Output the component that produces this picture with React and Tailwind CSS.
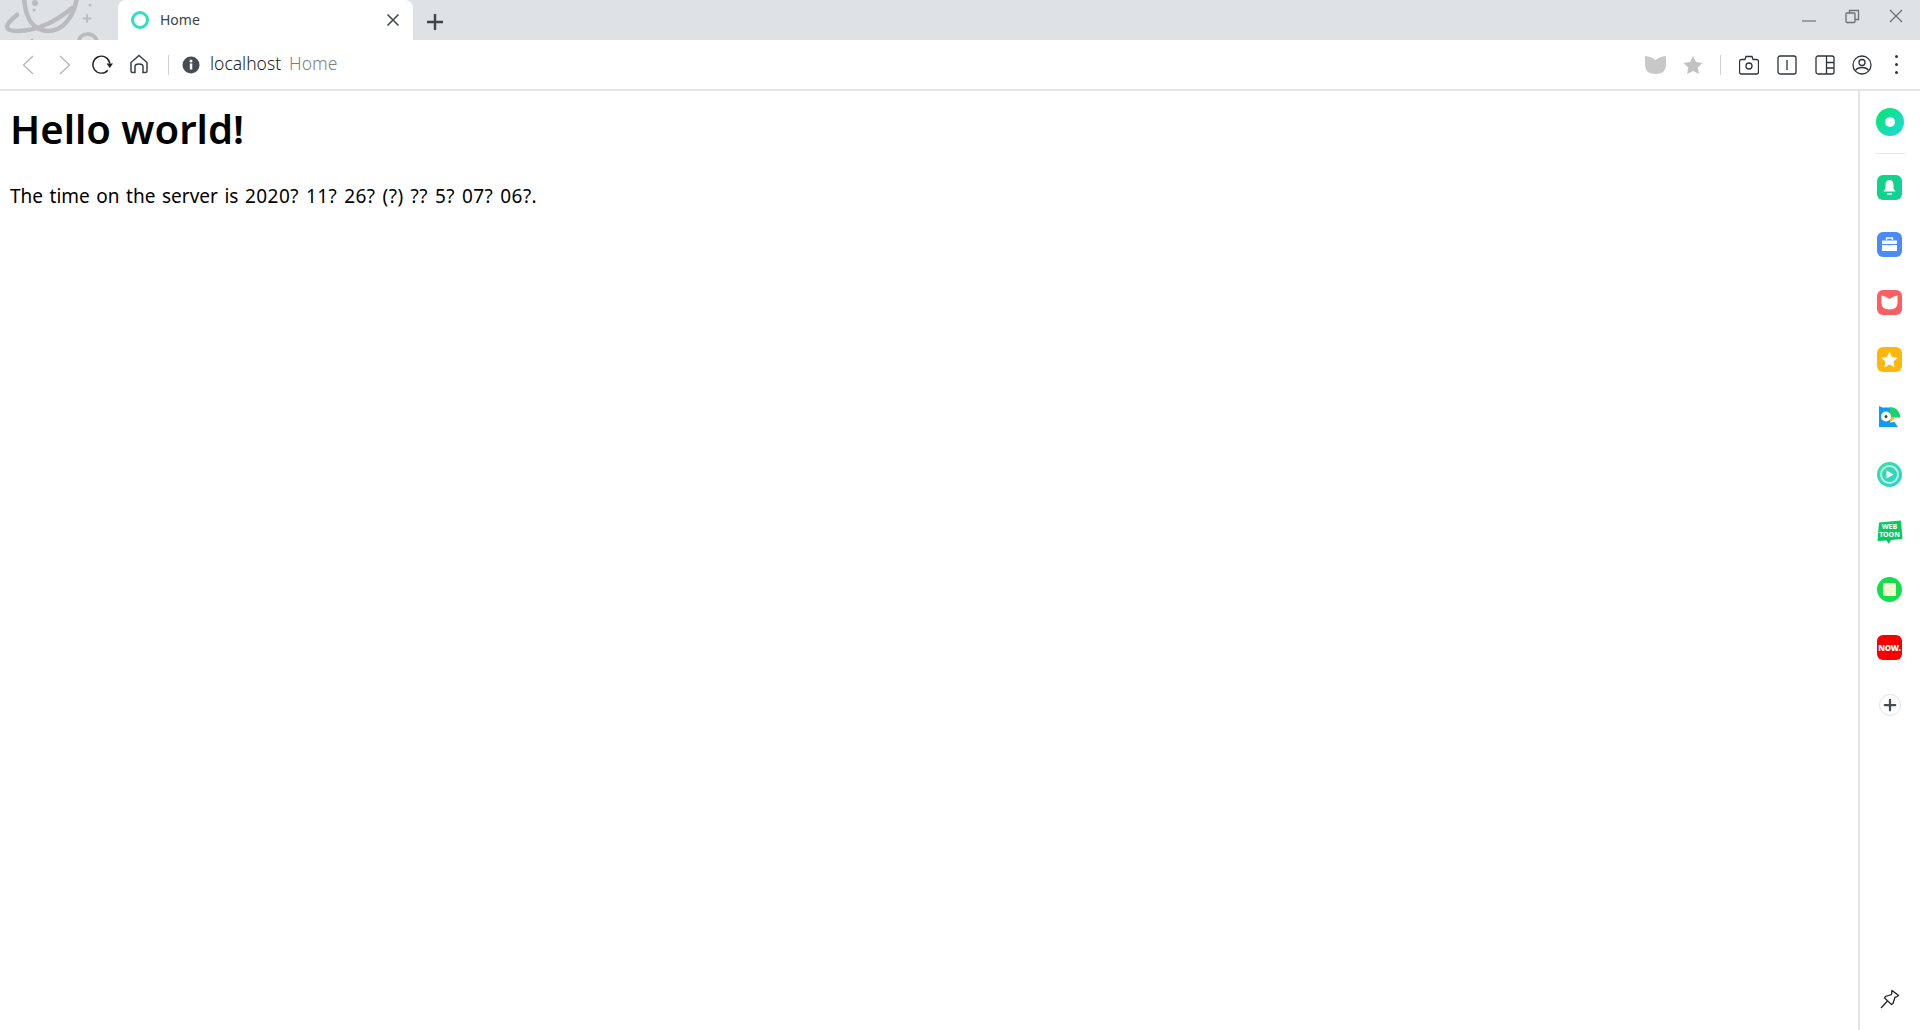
import { Plus } from 'lucide-react';

function Planet() {
  return (
    <svg width="118" height="40" viewBox="0 0 118 40" className="absolute left-0 top-0" fill="none" stroke="#b9bbbf" strokeLinecap="round">
      <path d="M24 -3 C25 15 30 30 48 31 C62 31 74 18 77 -3" strokeWidth="4.500" />
      <path d="M72 8 C58 20 38 31 18 31 C4 31 3 26 17 15" strokeWidth="4.500" />
      <circle cx="35" cy="3" r="3" fill="#b9bbbf" stroke="none" />
      <circle cx="34" cy="10" r="1.500" fill="#b9bbbf" stroke="none" />
      <circle cx="90" cy="5" r="1.500" fill="#b9bbbf" stroke="none" />
      <path d="M87 15 L87 22 M83.500 18.500 L90.500 18.500" strokeWidth="1.800" />
      <path d="M79 42 C79 32 95 31 97 42" strokeWidth="4" />
      <circle cx="32" cy="40" r="1.500" fill="#b9bbbf" stroke="none" />
    </svg>
  );
}

function TabBar() {
  return (
    <div className="relative flex h-10 overflow-hidden bg-[#dee1e6]">
      <Planet />
      <div className="relative ml-[118px] flex h-10 w-[295px] items-center rounded-t-lg bg-white pl-[13px] pr-[13px]">
        <span className="h-[18px] w-[18px] rounded-full border-[3px] border-[#2fdfc0]" />
        <span className="mb-[1px] ml-[11px] text-[14px] text-[#3c4043]">Home</span>
        <svg width="14" height="14" viewBox="0 0 14 14" fill="none" stroke="#45494e" strokeWidth="1.600" className="ml-auto">
          <path d="M1.500 1.500L12.500 12.500M12.500 1.500L1.500 12.500" />
        </svg>
      </div>
      <svg width="16" height="16" viewBox="0 0 16 16" stroke="#3f444a" strokeWidth="2.400" className="relative ml-[14px] mt-[14px]">
        <path d="M8 0V16M0 8H16" />
      </svg>
      <div className="relative ml-auto flex items-start">
        <svg width="16" height="4" viewBox="0 0 16 4" className="mr-[28px] mt-[19px]"><path d="M1 2H15" stroke="#85888c" strokeWidth="1.500" /></svg>
        <svg width="15" height="15" viewBox="0 0 15 15" fill="none" stroke="#6d7073" strokeWidth="1.300" className="mr-[29px] mt-[9px]">
          <rect x="1" y="4" width="9" height="9.500" rx="1" />
          <path d="M4.500 4V1.500H13.500V10.500H10" />
        </svg>
        <svg width="14" height="14" viewBox="0 0 14 14" fill="none" stroke="#6d7073" strokeWidth="1.300" className="mr-[17px] mt-[9px]"><path d="M1 1L13 13M13 1L1 13" /></svg>
      </div>
    </div>
  );
}

function Toolbar() {
  return (
    <div className="flex h-[51px] items-center border-b-2 border-[#e3e4e6] bg-white">
      <svg width="12" height="20" viewBox="0 0 12 20" fill="none" stroke="#b4b7bb" strokeWidth="1.300" className="ml-[22px]"><path d="M11 1L1.500 10L11 19" /></svg>
      <svg width="12" height="20" viewBox="0 0 12 20" fill="none" stroke="#b4b7bb" strokeWidth="1.300" className="ml-[25px]"><path d="M1 1L10.500 10L1 19" /></svg>
      <svg width="22" height="22" viewBox="0 0 22 22" fill="none" className="mb-[1px] ml-[20px]">
        <path d="M18.800 10.500A8.500 8.500 0 1 0 16.800 17.200" stroke="#222" strokeWidth="1.400" />
        <path d="M15.500 10.500H22L18.800 15Z" fill="#222" />
      </svg>
      <svg width="20" height="20" viewBox="0 0 20 20" fill="none" stroke="#3c4147" strokeWidth="1.500" className="mb-[2px] ml-[16px]">
        <path d="M2 8.500L10 1.500L18 8.500V17Q18 18.500 16.500 18.500H14V12.500Q14 10 10 10Q6 10 6 12.500V18.500H3.500Q2 18.500 2 17Z" />
      </svg>
      <div className="ml-[19px] h-[20px] w-px bg-[#d0d1d3]" />
      <svg width="18" height="18" viewBox="0 0 18 18" className="ml-[13px]">
        <circle cx="9" cy="9" r="8.500" fill="#474c53" />
        <rect x="7.800" y="7.500" width="2.500" height="6" fill="#fff" />
        <circle cx="9" cy="5" r="1.500" fill="#fff" />
      </svg>
      <span className="mb-[2px] ml-[10px] text-[17.5px] font-light text-[#202124]">localhost</span>
      <span className="mb-[2px] ml-[8px] text-[17.5px] font-light text-[#7d8084]">Home</span>
      <div className="ml-auto flex items-center">
        <svg width="21" height="19" viewBox="0 0 21 19" fill="#c8c8c8"><path d="M0 1Q6 1.500 10.500 5Q15 1.500 21 1V9.500Q21 19 10.500 19Q0 19 0 9.500Z" /></svg>
        <svg width="20" height="20" viewBox="0 0 22 21" fill="#c2c2c2" className="ml-[17px]"><path d="M11 0.500L14.300 7.200L21.500 8.200L16.200 13.200L17.500 20.500L11 17L4.500 20.500L5.800 13.200L0.500 8.200L7.700 7.200Z" /></svg>
        <div className="ml-[17px] h-[20px] w-px bg-[#d0d1d3]" />
        <svg width="20" height="20" viewBox="0 0 20 20" fill="none" stroke="#2f3338" strokeWidth="1.300" className="ml-[18px]">
          <path d="M2.500 4.500H6L7 1.500H13L14 4.500H17.500Q19.500 4.500 19.500 6.500V17Q19.500 19 17.500 19H2.500Q0.500 19 0.500 17V6.500Q0.500 4.500 2.500 4.500Z" />
          <circle cx="10" cy="11" r="3" />
        </svg>
        <svg width="20" height="20" viewBox="0 0 20 20" fill="none" stroke="#2f3338" strokeWidth="1.300" className="ml-[18px]">
          <rect x="1" y="1" width="18" height="18" rx="2" />
          <path d="M10 5V15" />
        </svg>
        <svg width="20" height="20" viewBox="0 0 20 20" fill="none" stroke="#2f3338" strokeWidth="1.300" className="ml-[18px]">
          <rect x="1" y="1" width="18" height="18" rx="2" />
          <path d="M11.500 1V19M11.500 7.500H19M11.500 13H19" />
        </svg>
        <svg width="20" height="20" viewBox="0 0 20 20" fill="none" stroke="#2f3338" strokeWidth="1.300" className="ml-[17px]">
          <circle cx="10" cy="10" r="9" />
          <circle cx="10" cy="7.500" r="3" />
          <path d="M3.500 15.500C6 11.500 14 11.500 16.500 15.500" />
        </svg>
        <div className="ml-[23px] mr-[22px] flex flex-col gap-[5px]">
          <span className="h-[3px] w-[3px] rounded-full bg-[#33373c]" />
          <span className="h-[3px] w-[3px] rounded-full bg-[#33373c]" />
          <span className="h-[3px] w-[3px] rounded-full bg-[#33373c]" />
        </div>
      </div>
    </div>
  );
}

function Sidebar() {
  return (
    <aside className="flex w-[62px] flex-col items-center border-l-2 border-[#e5e5e5] bg-white pr-[1px]">
      <div className="mt-[17px] flex h-7 w-7 items-center justify-center rounded-full bg-gradient-to-br from-[#14e35a] to-[#24d9e0]">
        <span className="h-[10px] w-[10px] rounded-full bg-white" />
      </div>
      <div className="mt-[17px] h-px w-[30px] bg-[#e8e8e8]" />
      <div className="mt-[21px] flex h-[25px] w-[25px] items-center justify-center rounded-[6px] bg-gradient-to-br from-[#0fd480] to-[#12d29a]">
        <svg width="15" height="17" viewBox="0 0 15 17" fill="#fff"><path d="M7.500 1C4.500 1 3.500 3.500 3.500 6V9.500L1.500 12.500H13.500L11.500 9.500V6C11.500 3.500 10.500 1 7.500 1Z" /><rect x="5" y="14" width="5" height="1.800" rx="0.900" /></svg>
      </div>
      <div className="mt-[32px] flex h-[25px] w-[25px] items-center justify-center rounded-[6px] bg-[#4b8bf7]">
        <svg width="17" height="15" viewBox="0 0 17 15"><path d="M5.500 3V1H11.500V3" fill="none" stroke="#fff" strokeWidth="1.300" /><path d="M1 3.500H16V7H1Z" fill="#fff" /><path d="M1 8H16V14H1Z" fill="#fff" /><rect x="7" y="7" width="3" height="1.300" fill="#4b8bf7" /></svg>
      </div>
      <div className="mt-[33px] flex h-[25px] w-[25px] items-center justify-center rounded-[6px] bg-[#fb5f62]">
        <svg width="17" height="15" viewBox="0 0 17 15" fill="#fff"><path d="M0.500 0.500Q5 1 8.500 4Q12 1 16.500 0.500V7.500Q16.500 14.500 8.500 14.500Q0.500 14.500 0.500 7.500Z" /></svg>
      </div>
      <div className="mt-[32px] flex h-[25px] w-[25px] items-center justify-center rounded-[6px] bg-[#ffb60d]">
        <svg width="17" height="17" viewBox="0 0 22 21" fill="#fff"><path d="M11 0.500L14.300 7.200L21.500 8.200L16.200 13.200L17.500 20.500L11 17L4.500 20.500L5.800 13.200L0.500 8.200L7.700 7.200Z" /></svg>
      </div>
      <svg width="22" height="22" viewBox="0 0 22 22" className="mt-[34px]">
        <path d="M0 0L3.500 1.500H11V21H0Z" fill="#0e9df5" />
        <path d="M11 1A10.500 10.500 0 0 1 21.500 11.500H11Z" fill="#1fd06f" />
        <path d="M11 11.500H16.500L11 16.500Z" fill="#ffbd0a" />
        <path d="M11 21H19L15.500 16L11 16.500Z" fill="#0e9df5" />
        <circle cx="7" cy="10.500" r="5" fill="#fff" />
        <circle cx="7" cy="10.500" r="1.500" fill="#444" />
      </svg>
      <div className="mt-[34px] flex h-[25px] w-[25px] items-center justify-center rounded-full bg-gradient-to-br from-[#3ddc97] to-[#2ad3d3]">
        <span className="flex h-[19px] w-[19px] items-center justify-center rounded-full border-2 border-[#b8f2e6]">
          <svg width="8" height="9" viewBox="0 0 8 9" fill="#fff"><path d="M0.500 0.500L7.500 4.500L0.500 8.500Z" /></svg>
        </span>
      </div>
      <div className="relative mt-[33px] flex h-[24px] w-[26px] items-center justify-center">
        <svg width="26" height="24" viewBox="0 0 26 24" className="absolute inset-0"><path d="M2 2.500L24 0.500L25.500 19L14 20L12 24L9.500 20.500L0.500 21Z" fill="#0ac95f" /></svg>
        <span className="relative mb-[3px] text-center text-[7px] font-bold leading-[8px] text-white">WEB<br />TOON</span>
      </div>
      <div className="mt-[33px] flex h-[25px] w-[25px] items-center justify-center rounded-full bg-[#10e04c]">
        <span className="h-[13px] w-[13px] bg-[#fbf6cf]" />
      </div>
      <div className="mt-[33px] flex h-[25px] w-[25px] items-center justify-center rounded-[6px] bg-[#f80000]">
        <span className="text-[8px] font-black tracking-tight text-white">NOW.</span>
      </div>
      <div className="mt-[34px] flex h-[22px] w-[22px] items-center justify-center rounded-full border border-[#e2e2e2]">
        <Plus size={18} strokeWidth={3} className="text-[#454b55]" />
      </div>
      <svg width="20" height="20" viewBox="0 0 20 20" fill="none" stroke="#1f2125" strokeWidth="1.300" className="mb-[21px] mt-auto">
        <path d="M12 1.500L18.500 6.500C17.500 8 16 8 15 8.200L13 14.500L11.500 15.500L4.500 9L5.500 7.500L11.500 5.500C12 4.500 11.500 3 12 1.500Z" />
        <path d="M7.500 12L1 19" />
      </svg>
    </aside>
  );
}

export default function App() {
  return (
    <div className="flex h-[1030px] flex-col bg-white font-['Noto_Sans',sans-serif] text-black">
      <TabBar />
      <Toolbar />
      <div className="flex flex-1">
        <main className="flex-1 px-[10px]">
          <h1 className="mt-[11px] text-[40px] font-semibold leading-[54px]">Hello world!</h1>
          <p className="mt-[26px] text-[19px] leading-[28px] [word-spacing:1.6px]">
            The time on the server is <span className="tracking-[0.45px]">2020? 11? 26? (?) ?? 5? 07? 06?.</span>
          </p>
        </main>
        <Sidebar />
      </div>
    </div>
  );
}
